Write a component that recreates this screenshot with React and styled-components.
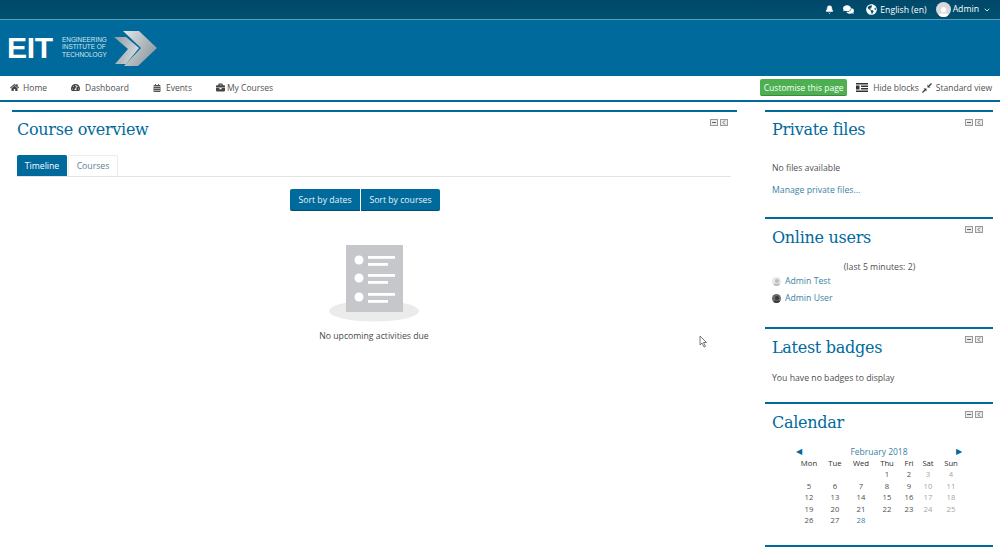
import React from "react";
import styled, { createGlobalStyle } from "styled-components";
import { Bell, ChevronDown } from "lucide-react";
import { FaHome, FaTachometerAlt, FaCalendarAlt, FaBriefcase, FaComments, FaGlobeAmericas, FaUser } from "react-icons/fa";

const Global = createGlobalStyle`
  html, body { margin: 0; padding: 0; background: #fff; }
  body { font-family: "Open Sans", "Liberation Sans", sans-serif; font-size: 9px; color: #4a4a4a; overflow: hidden; }
  * { box-sizing: border-box; }
`;
const Shell = styled.div`width: 1000px; height: 551px; overflow: hidden; position: relative;`;
const TopBar = styled.div`
  height: 20px; background: linear-gradient(#00486a, #00506f); border-bottom: 1px solid #5f9cb8;
  display: flex; align-items: center; justify-content: flex-end; color: #fff; padding-right: 9px;
`;
const TopIcon = styled.span`display: flex; margin-right: ${p => p.$mr}px;`;
const Lang = styled.span`font-size: 8.7px; margin-left: 3px; margin-right: 9px; padding-top: 1px;`;
const Avatar = styled.span`
  width: 15px; height: 15px; border-radius: 50%; background: #d9d9d9; display: flex; align-items: flex-end; justify-content: center; overflow: hidden; margin-right: 2px;
`;
const AdminName = styled.span`font-size: 8.7px; margin-right: 4px; margin-top: -2px;`;
const Banner = styled.div`height: 56px; background: #006a9c; display: flex; align-items: center; padding-left: 7px; color: #fff;`;
const LogoMark = styled.span`font-family: "Liberation Sans", sans-serif; font-weight: 700; font-size: 30px; line-height: 1; letter-spacing: -0.3px; width: 55px; margin-top: -1px;`;
const LogoText = styled.span`font-family: "Liberation Sans", sans-serif; font-size: 6.4px; line-height: 7.6px; color: #d5e6ee; width: 53px; margin-top: -2px; white-space: nowrap;`;
const Nav = styled.nav`
  height: 26px; background: #fff; border-bottom: 2px solid #006a9c; display: flex; align-items: center; padding: 0 8px 1px 10px; font-size: 8.5px; color: #555;
`;
const NavItem = styled.span`display: flex; align-items: center; gap: ${p => p.$gap}px; margin-right: ${p => p.$mr || 0}px; color: #505050;`;
const Grow = styled.span`flex: 1;`;
const GreenButton = styled.span`
  background: #4caf50; color: #fff; border-radius: 2px; height: 17px; display: flex; align-items: center; width: 87px; justify-content: center;
  border-bottom: 1px solid #3a8a3e; margin-right: 9px; font-size: 8.5px; white-space: nowrap;
`;
const Page = styled.div`display: flex; padding: 8px 7px 0 12px; gap: 28px;`;
const Main = styled.main`width: 725px; height: 400px; border-top: 2px solid #006a9c; padding: 8px 6px 0 5px; position: relative;`;
const Side = styled.aside`width: 228px; display: flex; flex-direction: column;`;
const Heading = styled.h2`
  margin: 0; font-family: "DejaVu Serif", "Liberation Serif", serif; font-weight: 400; font-size: 16px; letter-spacing: -0.28px; line-height: 20px; color: #006a9c;
`;
const Controls = styled.span`position: absolute; top: 7px; right: ${p => p.$right}px; display: flex; gap: 2px;`;
const Ctl = styled.span`width: 8px; height: 7px; background: #ececec; border: 1px solid #9a9a9a; display: flex; align-items: center; justify-content: center;`;
const Mark = styled.span`width: 4px; height: 1px; background: #666;`;
const Tabs = styled.div`display: flex; margin-top: 15px; height: 22px; border-bottom: 1px solid #e3e3e3; gap: 1px;`;
const Tab = styled.span`
  display: flex; align-items: center; justify-content: center; font-size: 8.7px; width: ${p => p.$w}px; border-radius: 2px 2px 0 0;
  background: ${p => p.$active ? "#006a9c" : "#fff"}; color: ${p => p.$active ? "#fff" : "#5e7f90"};
  border: 1px solid ${p => p.$active ? "#006a9c" : "#ececec"}; border-bottom: 0;
`;
const SortRow = styled.div`display: flex; justify-content: center; margin-top: 12px; padding-right: 18px;`;
const SortBtn = styled.span`
  height: 22px; width: ${p => p.$w}px; background: #006a9c; color: #e8f2f7; font-size: 8.7px; display: flex; align-items: center; justify-content: center;
  border-bottom: 1px solid #004e72; border-radius: ${p => p.$r}; margin-left: ${p => p.$ml || 0}px;
`;
const Empty = styled.div`display: flex; flex-direction: column; align-items: center; margin-top: 34px;`;
const EmptyText = styled.div`font-size: 8.7px; margin-top: 7px; color: #4a4a4a;`;
const Block = styled.section`
  height: ${p => p.$h}px; border-top: 2px solid #006a9c; padding: ${p => p.$pt || 8.5}px 6px 0 7px; position: relative;
`;
const Muted = styled.p`margin: ${p => p.$mt}px 0 0; font-size: 8.7px; line-height: 12px; color: #4f4f4f;`;
const Link = styled.p`margin: ${p => p.$mt}px 0 0; font-size: 8.7px; line-height: 12px; color: #3c7fa3;`;
const Center = styled.p`margin: 13.5px 0 0; font-size: 8.7px; line-height: 12px; text-align: center; color: #4f4f4f;`;
const UserRow = styled.div`display: flex; align-items: center; gap: 4px; margin-top: ${p => p.$mt}px; font-size: 8.7px; line-height: 12px; color: #3c7fa3;`;
const UserPic = styled.span`width: 9px; height: 9px; border-radius: 50%; display: flex; overflow: hidden; align-items: flex-end; justify-content: center; background: ${p => p.$bg};`;
const Cal = styled.div`width: 168px; margin: 12.5px 0 0 24px; font-size: 7.7px; color: #4f4f4f;`;
const CalHead = styled.div`display: flex; justify-content: space-between; align-items: center; height: 12.5px; color: #3c7fa3; font-size: 8.5px;`;
const Arrow = styled.span`font-size: 7.5px; color: #006a9c; width: 12px; text-align: center; margin: 0 ${p => p.$mr || 0}px 0 ${p => p.$ml || 0}px;`;
const CalGrid = styled.div`display: grid; grid-template-columns: 26px 26px 26px 26px 18px 20px 26px; grid-auto-rows: 11.5px; line-height: 11.5px; text-align: center;`;
const DayName = styled.span`color: #2e2e2e; font-weight: 400;`;
const Day = styled.span`color: ${p => p.$weekend ? "#a5a5a5" : p.$today ? "#3c7fa3" : "#4f4f4f"};`;
const Cursor = styled.svg`position: absolute; left: 699px; top: 335px;`;

const Ctrls = ({ right }) => (
  <Controls $right={right}>
    <Ctl><Mark /></Ctl>
    <Ctl>
      <svg width="4" height="5" viewBox="0 0 4 5"><path d="M3 .5 1 2.5 3 4.5" fill="none" stroke="#666" /></svg>
    </Ctl>
  </Controls>
);

const Person = ({ size, color }) => <FaUser size={size} color={color} style={{ marginBottom: -1 }} />;

const days = ["", "", "", 1, 2, 3, 4, 5, 6, 7, 8, 9, 10, 11, 12, 13, 14, 15, 16, 17, 18, 19, 20, 21, 22, 23, 24, 25, 26, 27, 28];

export default function App() {
  return (
    <Shell>
      <Global />
      <TopBar>
        <TopIcon $mr={9}><Bell size={9} fill="#fff" strokeWidth={1.5} /></TopIcon>
        <TopIcon $mr={12}><FaComments size={11} /></TopIcon>
        <TopIcon $mr={0}><FaGlobeAmericas size={11} /></TopIcon>
        <Lang>English (en)</Lang>
        <Avatar><Person size={11} color="#fff" /></Avatar>
        <AdminName>Admin</AdminName>
        <TopIcon $mr={0}><ChevronDown size={8} strokeWidth={2.5} /></TopIcon>
      </TopBar>
      <Banner>
        <LogoMark>EIT</LogoMark>
        <LogoText>ENGINEERING<br />INSTITUTE OF<br />TECHNOLOGY</LogoText>
        <svg width="44" height="36" viewBox="0 0 44 36" style={{ marginLeft: -1 }}>
          <defs>
            <linearGradient id="chev" x1="0" y1="0" x2="1" y2="0.6">
              <stop offset="0" stopColor="#e4e8ea" />
              <stop offset="1" stopColor="#8f9aa0" />
            </linearGradient>
            <linearGradient id="chev2" x1="0" y1="0" x2="1" y2="0.4">
              <stop offset="0" stopColor="#8e9aa1" />
              <stop offset="1" stopColor="#d4d8da" />
            </linearGradient>
          </defs>
          <path d="M0 7 L12 7 L25 18 L12 34 L1 34 L14 19 Z" fill="url(#chev2)" />
          <path d="M9 1 L25 1 L43 18 L24 36 L10 36 L27 18 Z" fill="url(#chev)" />
        </svg>
      </Banner>
      <Nav>
        <NavItem $gap={4} $mr={24}><FaHome size={9} color="#444" />Home</NavItem>
        <NavItem $gap={5} $mr={24}><FaTachometerAlt size={9} color="#444" />Dashboard</NavItem>
        <NavItem $gap={5} $mr={24}><FaCalendarAlt size={8} color="#555" />Events</NavItem>
        <NavItem $gap={2}><FaBriefcase size={9} color="#444" />My Courses</NavItem>
        <Grow />
        <GreenButton>Customise this page</GreenButton>
        <NavItem $gap={5} $mr={3}>
          <svg width="12" height="9" viewBox="0 0 12 9"><path d="M0 0h12v1.5H0zM5 2.5h7V4H5zM5 5h7v1.5H5zM0 7.5h12V9H0zM0 2.5h3.5v4H0z" fill="#333" /></svg>
          Hide blocks
        </NavItem>
        <NavItem $gap={4}>
          <svg width="10" height="10" viewBox="0 0 10 10"><path d="M0.5 9.5 3 7M9.5 .5 7 3" stroke="#333" strokeWidth="1.2" fill="none" /><path d="M4.5 5.5V8.5L1.5 5.5ZM5.5 4.5V1.5L8.5 4.5Z" fill="#333" /></svg>
          Standard view
        </NavItem>
      </Nav>
      <Page>
        <Main>
          <Heading>Course overview</Heading>
          <Ctrls right={9} />
          <Tabs>
            <Tab $active $w={50}>Timeline</Tab>
            <Tab $w={50}>Courses</Tab>
          </Tabs>
          <SortRow>
            <SortBtn $w={70} $r="2px 0 0 2px">Sort by dates</SortBtn>
            <SortBtn $w={79} $ml={1} $r="0 2px 2px 0">Sort by courses</SortBtn>
          </SortRow>
          <Empty>
            <svg width="90" height="78" viewBox="0 0 90 78">
              <ellipse cx="45" cy="66" rx="45" ry="10.5" fill="#ebebec" />
              <rect x="17" y="0" width="57" height="67" fill="#c5c7ca" />
              {[15, 33, 52].map(y => (
                <g key={y} fill="#fff">
                  <circle cx="30" cy={y} r="4.5" />
                  <rect x="39" y={y - 4} width="27" height="2.8" />
                  <rect x="39" y={y + 3} width="20" height="2.8" />
                </g>
              ))}
            </svg>
            <EmptyText>No upcoming activities due</EmptyText>
          </Empty>
        </Main>
        <Side>
          <Block $h={107} $pt={7.5}>
            <Heading>Private files</Heading>
            <Ctrls right={10} />
            <Muted $mt={22.5}>No files available</Muted>
            <Link $mt={10}>Manage private files...</Link>
          </Block>
          <Block $h={110}>
            <Heading>Online users</Heading>
            <Ctrls right={10} />
            <Center>(last 5 minutes: 2)</Center>
            <UserRow $mt={2}><UserPic $bg="#e6e6e6"><Person size={8} color="#bdbdbd" /></UserPic>Admin Test</UserRow>
            <UserRow $mt={5}><UserPic $bg="#6a6a6a"><Person size={8} color="#3a3a3a" /></UserPic>Admin User</UserRow>
          </Block>
          <Block $h={75}>
            <Heading>Latest badges</Heading>
            <Ctrls right={10} />
            <Muted $mt={14.5}>You have no badges to display</Muted>
          </Block>
          <Block $h={143}>
            <Heading>Calendar</Heading>
            <Ctrls right={10} />
            <Cal>
              <CalHead>
                <Arrow $ml={-3}>◀</Arrow>
                <span>February 2018</span>
                <Arrow $mr={-1}>▶</Arrow>
              </CalHead>
              <CalGrid>
                {["Mon", "Tue", "Wed", "Thu", "Fri", "Sat", "Sun"].map(d => <DayName key={d}>{d}</DayName>)}
                {days.map((d, i) => (
                  <Day key={i} $weekend={i % 7 >= 5} $today={d === 28}>{d}</Day>
                ))}
              </CalGrid>
            </Cal>
          </Block>
          <Block $h={10} />
        </Side>
      </Page>
      <Cursor width="9" height="13" viewBox="0 0 9 13">
        <path d="M1 1v9l2-2 2 4 1.5-.7-2-3.8H7.5Z" fill="#fff" stroke="#555" strokeWidth=".8" />
      </Cursor>
    </Shell>
  );
}
